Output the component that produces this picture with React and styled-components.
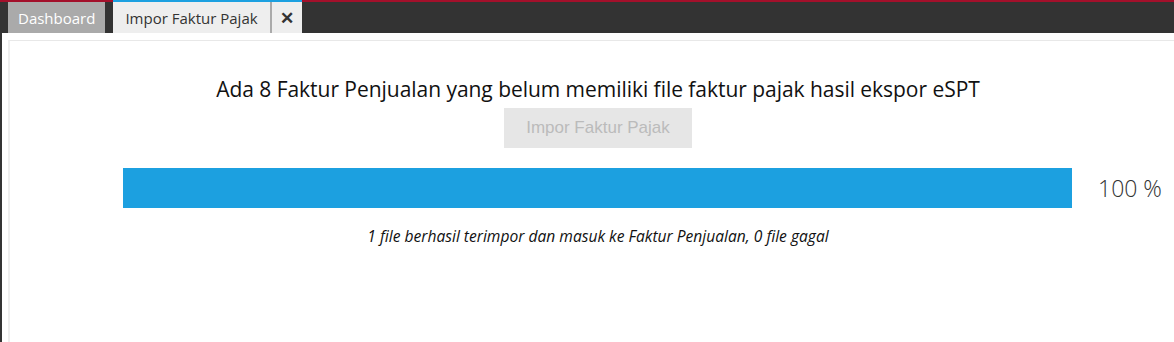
import React from "react";
import styled, { createGlobalStyle } from "styled-components";

const Global = createGlobalStyle`
  html, body { margin: 0; padding: 0; background: #fff; }
  body { font-family: "Open Sans", "Noto Sans", sans-serif; }
  * { box-sizing: border-box; }
`;

const TopBar = styled.div`
  height: 33px;
  background: #333;
  border-top: 2px solid #a3102b;
  display: flex;
  align-items: flex-end;
  padding-left: 8px;
  gap: 8px;
  position: relative;
`;

const Tab = styled.div`
  height: ${(p) => (p.$active ? "33px" : "31px")};
  margin-top: ${(p) => (p.$active ? "-2px" : "0")};
  background: ${(p) => (p.$active ? "#eee" : "#aaa")};
  color: ${(p) => (p.$active ? "#333" : "#fff")};
  border-top: ${(p) => (p.$active ? "2px solid #1ca0e0" : "none")};
  display: flex;
  align-items: center;
  font-size: 15px;
  font-family: "Open Sans", sans-serif;
`;

const TabLabel = styled.span`
  padding: 0 ${(p) => p.$pad}px;
  line-height: 28px;
`;

const CloseBtn = styled.span`
  width: 32px;
  height: 100%;
  border-left: 2px solid #aaa;
  display: flex;
  align-items: center;
  justify-content: center;
  color: #333;
  font-size: 17px;
  font-weight: 700;
`;

const Body = styled.div`
  border-left: 2px solid #333;
  padding: 7px 0 0 6px;
  height: 309px;
`;

const Panel = styled.div`
  border-left: 2px solid #eee;
  border-top: 1px solid #e8e8e8;
  height: 100%;
  padding-top: 34px;
  display: flex;
  flex-direction: column;
  align-items: center;
`;

const Centered = styled.div`
  width: 100%;
  padding-left: 12px;
  display: flex;
  flex-direction: column;
  align-items: center;
`;

const Heading = styled.h2`
  margin: 0;
  font-weight: 400;
  font-size: 21px;
  line-height: 28px;
  color: #111;
  font-family: "Open Sans", sans-serif;
  white-space: nowrap;
  letter-spacing: -0.04px;
`;

const ImportButton = styled.button`
  margin-top: 5px;
  width: 188px;
  height: 40px;
  border: none;
  background: #e6e6e6;
  color: #bbb;
  font-family: "Liberation Sans", Arial, sans-serif;
  font-size: 17px;
`;

const ProgressRow = styled.div`
  margin-top: 20px;
  width: 100%;
  display: flex;
  align-items: center;
  padding-left: 113px;
`;

const Track = styled.div`
  flex: 1;
  height: 40px;
  background: #f3f3f3;
`;

const Fill = styled.div`
  height: 100%;
  background: #1ca0e0;
`;

const Percent = styled.span`
  width: 102px;
  padding-left: 26px;
  font-size: 23px;
  font-weight: 300;
  color: #333;
  font-family: "Open Sans", sans-serif;
`;

const Caption = styled.p`
  margin: 18px 0 0;
  font-style: italic;
  font-size: 15.6px;
  line-height: 20px;
  color: #111;
  padding-left: 12px;
  white-space: nowrap;
`;

export default function App() {
  const progress = 100;
  return (
    <>
      <Global />
      <TopBar>
        <Tab>
          <TabLabel $pad={10}>Dashboard</TabLabel>
        </Tab>
        <Tab $active>
          <TabLabel $pad={12}>Impor Faktur Pajak</TabLabel>
          <CloseBtn>✕</CloseBtn>
        </Tab>
      </TopBar>
      <Body>
        <Panel>
          <Centered>
            <Heading>
              Ada 8 Faktur Penjualan yang belum memiliki file faktur pajak hasil ekspor eSPT
            </Heading>
            <ImportButton disabled>Impor Faktur Pajak</ImportButton>
          </Centered>
          <ProgressRow>
            <Track>
              <Fill style={{ width: `${progress}%` }} />
            </Track>
            <Percent>{progress} %</Percent>
          </ProgressRow>
          <Caption>
            1 file berhasil terimpor dan masuk ke Faktur Penjualan, 0 file gagal
          </Caption>
        </Panel>
      </Body>
    </>
  );
}
